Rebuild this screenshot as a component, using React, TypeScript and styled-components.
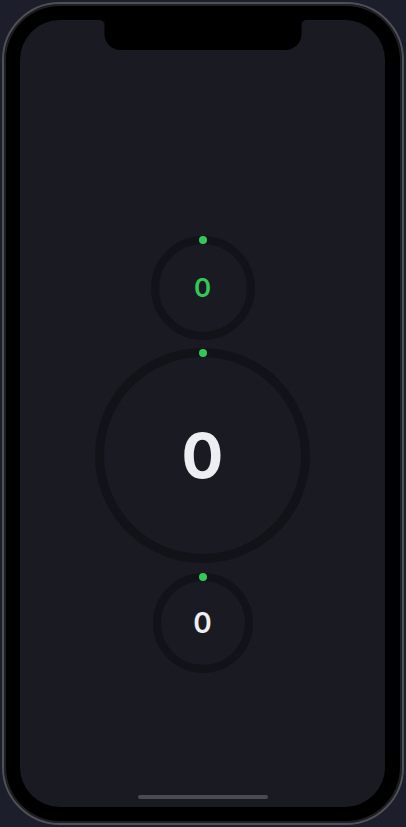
import React from 'react';
import styled, { createGlobalStyle } from 'styled-components';

const GlobalStyle = createGlobalStyle`
  html, body {
    margin: 0;
    padding: 0;
    background: #1c1e2b;
    font-family: Inter, "Noto Sans", sans-serif;
  }
  * { box-sizing: border-box; }
`;

const Stage = styled.div`
  width: 406px;
  height: 827px;
  padding: 2px;
  display: flex;
`;

const Phone = styled.div`
  flex: 1;
  border-radius: 58px;
  background: #000;
  border: 2px solid #505156;
  box-shadow: inset 0 0 0 2px #1e1f22;
  padding: 16px 17px 16px 16px;
  display: flex;
`;

const Screen = styled.div`
  position: relative;
  flex: 1;
  border-radius: 40px;
  background: #1a1b22;
  overflow: hidden;
  display: flex;
  flex-direction: column;
  align-items: center;
  padding-top: 216px;
`;

const Notch = styled.div`
  position: absolute;
  top: 0;
  left: 50%;
  transform: translateX(-50%);
  width: 197px;
  height: 30px;
  background: #000;
  border-radius: 0 0 16px 16px;

  &:before,
  &:after {
    content: '';
    position: absolute;
    top: 0;
    width: 6px;
    height: 6px;
  }
  &:before {
    left: -6px;
    background: radial-gradient(circle at 0 100%, transparent 6px, #000 6.5px);
  }
  &:after {
    right: -6px;
    background: radial-gradient(circle at 100% 100%, transparent 6px, #000 6.5px);
  }
`;

const Stack = styled.div`
  display: flex;
  flex-direction: column;
  align-items: center;
`;

const Ring = styled.div<{ size: number; stroke: number; gapTop?: number }>`
  position: relative;
  width: ${({ size }) => size}px;
  height: ${({ size }) => size}px;
  margin-top: ${({ gapTop }) => gapTop ?? 0}px;
  border-radius: 50%;
  border: ${({ stroke }) => stroke}px solid #121318;
  display: flex;
  align-items: center;
  justify-content: center;
`;

const Dot = styled.span<{ stroke: number }>`
  position: absolute;
  left: 50%;
  top: ${({ stroke }) => -stroke / 2 - 4}px;
  width: 8px;
  height: 8px;
  margin-left: -4px;
  border-radius: 50%;
  background: #34c759;
`;

const Value = styled.span<{ fontSize: number; weight: number; green?: boolean }>`
  font-size: ${({ fontSize }) => fontSize}px;
  font-weight: ${({ weight }) => weight};
  line-height: 1;
  color: ${({ green }) => (green ? '#34c759' : '#eceef2')};
`;

const HomeIndicator = styled.div`
  position: absolute;
  bottom: 8px;
  left: 50%;
  transform: translateX(-50%);
  width: 130px;
  height: 4px;
  border-radius: 2px;
  background: #4a4b51;
`;

const gauges = [
  { size: 104, stroke: 8, font: 26, weight: 600, green: true, gap: 0 },
  { size: 215, stroke: 9, font: 62, weight: 700, green: false, gap: 8 },
  { size: 100, stroke: 8, font: 28, weight: 600, green: false, gap: 10 },
];

export default function App() {
  return (
    <>
      <GlobalStyle />
      <Stage>
        <Phone>
          <Screen>
            <Notch />
            <Stack>
              {gauges.map((g, i) => (
                <Ring key={i} size={g.size} stroke={g.stroke} gapTop={g.gap}>
                  <Dot stroke={g.stroke} />
                  <Value fontSize={g.font} weight={g.weight} green={g.green}>
                    0
                  </Value>
                </Ring>
              ))}
            </Stack>
            <HomeIndicator />
          </Screen>
        </Phone>
      </Stage>
    </>
  );
}
